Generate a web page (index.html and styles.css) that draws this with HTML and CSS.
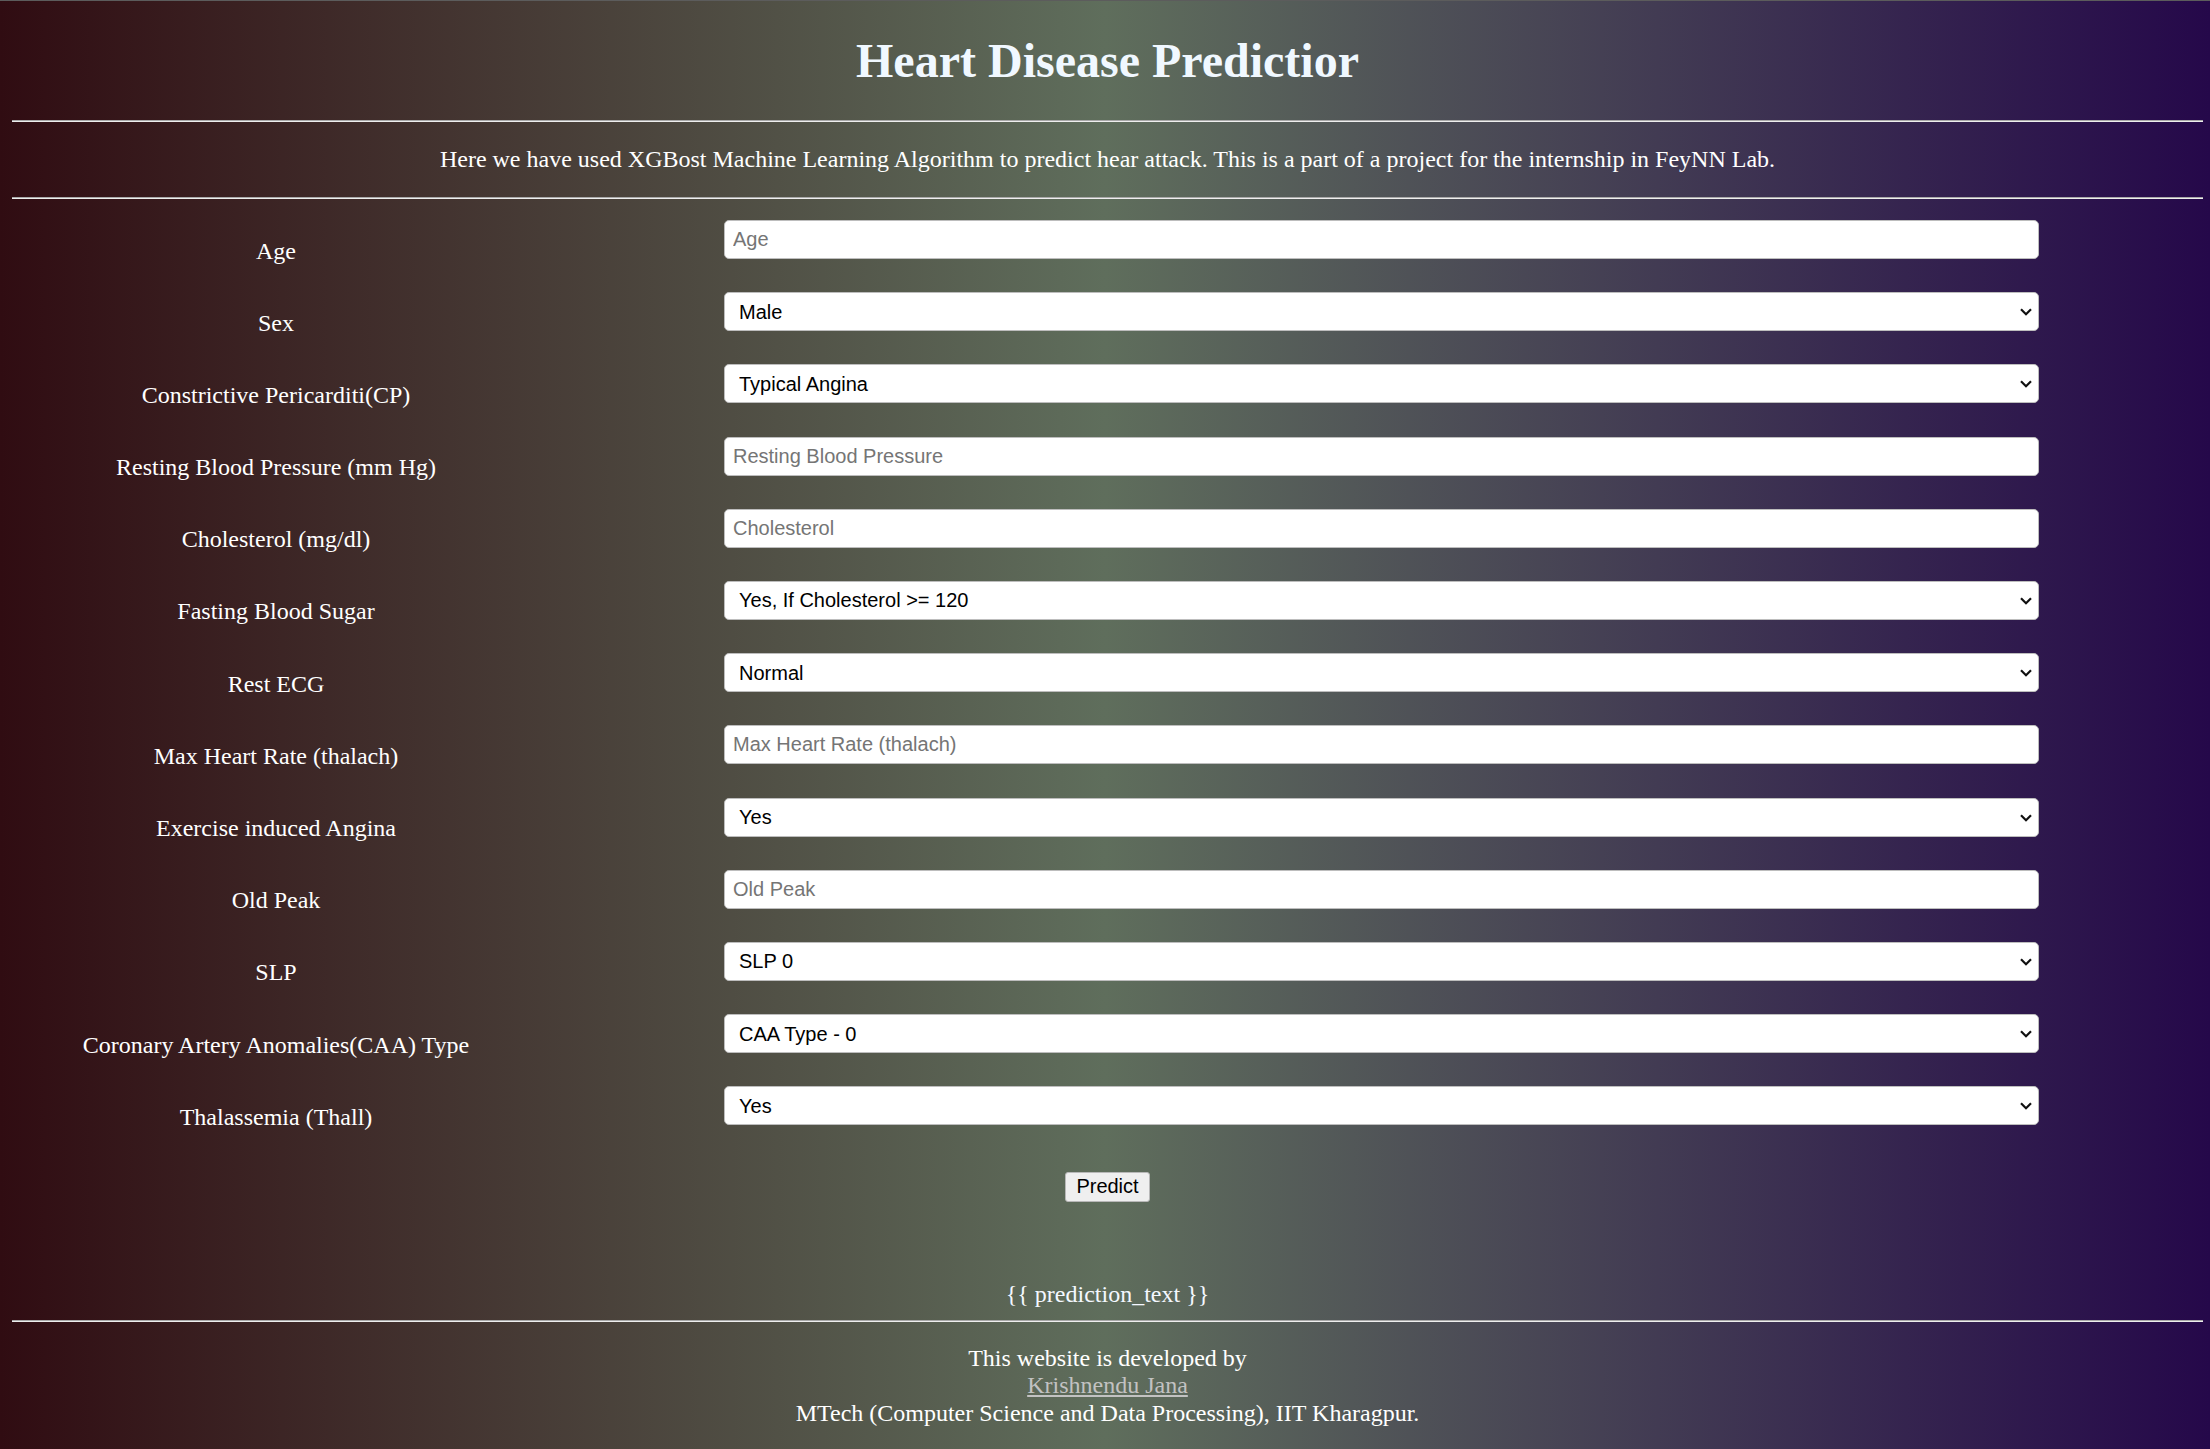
FILE: index.html
```html
<!DOCTYPE html>
<html lang="en">
<head>
<meta charset="utf-8">
<title>Heart Disease Predictor</title>
<link rel="stylesheet" href="styles.css">
</head>
<body>
<header class="top">
  <h1 class="title">Heart Disease Predictior</h1>
  <hr class="rule">
  <p class="intro">Here we have used XGBost Machine Learning Algorithm to predict hear attack. This is a part of a project for the internship in FeyNN Lab.</p>
  <hr class="rule">
</header>
<form class="form">
  <div class="grid">
    <label class="label">Age</label>
    <div class="field"><input class="input" type="text" placeholder="Age"></div>

    <label class="label">Sex</label>
    <div class="field"><select class="select"><option>Male</option><option>Female</option></select><svg class="chev" viewBox="0 0 12 8" width="12" height="8"><path d="M1 1.2 L6 6.2 L11 1.2" fill="none" stroke="#111" stroke-width="2.2"/></svg></div>

    <label class="label">Constrictive Pericarditi(CP)</label>
    <div class="field"><select class="select"><option>Typical Angina</option></select><svg class="chev" viewBox="0 0 12 8" width="12" height="8"><path d="M1 1.2 L6 6.2 L11 1.2" fill="none" stroke="#111" stroke-width="2.2"/></svg></div>

    <label class="label">Resting Blood Pressure (mm Hg)</label>
    <div class="field"><input class="input" type="text" placeholder="Resting Blood Pressure"></div>

    <label class="label">Cholesterol (mg/dl)</label>
    <div class="field"><input class="input" type="text" placeholder="Cholesterol"></div>

    <label class="label">Fasting Blood Sugar</label>
    <div class="field"><select class="select"><option>Yes, If Cholesterol &gt;= 120</option></select><svg class="chev" viewBox="0 0 12 8" width="12" height="8"><path d="M1 1.2 L6 6.2 L11 1.2" fill="none" stroke="#111" stroke-width="2.2"/></svg></div>

    <label class="label">Rest ECG</label>
    <div class="field"><select class="select"><option>Normal</option></select><svg class="chev" viewBox="0 0 12 8" width="12" height="8"><path d="M1 1.2 L6 6.2 L11 1.2" fill="none" stroke="#111" stroke-width="2.2"/></svg></div>

    <label class="label">Max Heart Rate (thalach)</label>
    <div class="field"><input class="input" type="text" placeholder="Max Heart Rate (thalach)"></div>

    <label class="label">Exercise induced Angina</label>
    <div class="field"><select class="select"><option>Yes</option></select><svg class="chev" viewBox="0 0 12 8" width="12" height="8"><path d="M1 1.2 L6 6.2 L11 1.2" fill="none" stroke="#111" stroke-width="2.2"/></svg></div>

    <label class="label">Old Peak</label>
    <div class="field"><input class="input" type="text" placeholder="Old Peak"></div>

    <label class="label">SLP</label>
    <div class="field"><select class="select"><option>SLP 0</option></select><svg class="chev" viewBox="0 0 12 8" width="12" height="8"><path d="M1 1.2 L6 6.2 L11 1.2" fill="none" stroke="#111" stroke-width="2.2"/></svg></div>

    <label class="label">Coronary Artery Anomalies(CAA) Type</label>
    <div class="field"><select class="select"><option>CAA Type - 0</option></select><svg class="chev" viewBox="0 0 12 8" width="12" height="8"><path d="M1 1.2 L6 6.2 L11 1.2" fill="none" stroke="#111" stroke-width="2.2"/></svg></div>

    <label class="label">Thalassemia (Thall)</label>
    <div class="field"><select class="select"><option>Yes</option></select><svg class="chev" viewBox="0 0 12 8" width="12" height="8"><path d="M1 1.2 L6 6.2 L11 1.2" fill="none" stroke="#111" stroke-width="2.2"/></svg></div>
  </div>
  <div class="actions"><button class="btn" type="button">Predict</button></div>
</form>
<p class="result">{{ prediction_text }}</p>
<hr class="rule">
<footer class="footer">
  This website is developed by<br>
  <a class="link" href="#">Krishnendu Jana</a><br>
  MTech (Computer Science and Data Processing), IIT Kharagpur.
</footer>
</body>
</html>
```

FILE: styles.css
```css
html {
  background: linear-gradient(to right, #300c12 0%, #5f6e5c 50%, #25084a 100%);
  min-height: 100%;
}

body {
  margin: 0;
  padding: 0 7px 0 12px;
  border-top: 1px solid #5c5c5c;
  min-height: 100vh;
  box-sizing: border-box;
  font-family: "Liberation Serif", "Times New Roman", serif;
  font-size: 24px;
  line-height: 28px;
  color: #ffffff;
}

.title {
  margin: 32px 0 31px;
  font-size: 48px;
  line-height: 56px;
  font-weight: 700;
  text-align: center;
  color: #f0f8ff;
}

.rule {
  margin: 0;
  height: 0;
  border: 0;
  border-top: 1px solid #a8a8a8;
  border-bottom: 1px solid #eeeeee;
}

.intro {
  margin: 23px 0 24px;
  text-align: center;
}

.form {
  padding-top: 21px;
}

.grid {
  display: grid;
  grid-template-columns: 528px 1315px;
  column-gap: 184px;
  row-gap: 27.7px;
  align-items: start;
}

.label {
  padding-top: 16.5px;
  text-align: center;
  line-height: 28px;
}

.field {
  position: relative;
  height: 39px;
}

.input,
.select {
  display: block;
  width: 100%;
  height: 39px;
  box-sizing: border-box;
  margin: 0;
  border: 1px solid #bdbdbd;
  border-radius: 5px;
  background: #ffffff;
  font-family: "Liberation Sans", Arial, sans-serif;
  font-size: 20px;
  color: #000000;
  outline: none;
}

.input {
  padding: 0 8px;
}

.input::placeholder {
  color: #757575;
}

.select {
  -webkit-appearance: none;
  appearance: none;
  padding: 0 30px 0 14px;
}

.chev {
  position: absolute;
  right: 7px;
  top: 16px;
  pointer-events: none;
}

.actions {
  margin-top: 40.5px;
  text-align: center;
}

.btn {
  height: 30px;
  padding: 0 10px;
  border: 1px solid #b8b8b8;
  border-radius: 3px;
  background: #efefef;
  font-family: "Liberation Sans", Arial, sans-serif;
  font-size: 20px;
  color: #000000;
}

.result {
  margin: 78px 0 12px;
  text-align: center;
  color: #f4f8ff;
}

.footer {
  margin-top: 23px;
  text-align: center;
  line-height: 27.6px;
}

.link {
  color: #c2c2c2;
  text-decoration: underline;
}
```
